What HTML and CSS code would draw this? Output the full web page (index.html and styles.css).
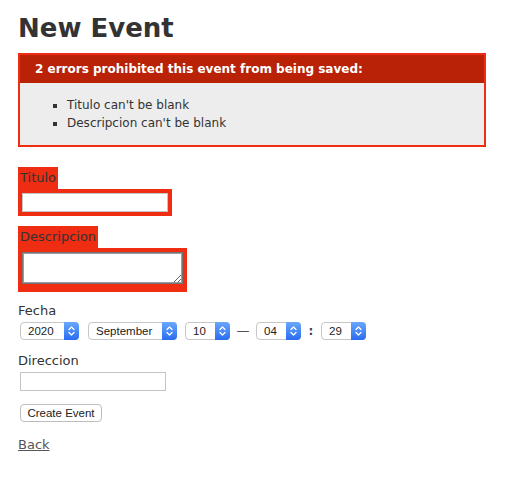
FILE: index.html
```html
<!DOCTYPE html>
<html lang="es">
<head>
<meta charset="utf-8">
<title>New Event</title>
<link rel="stylesheet" href="styles.css">
</head>
<body>
<h1>New Event</h1>
<form class="event-form">
  <div class="error-explanation">
    <h2>2 errors prohibited this event from being saved:</h2>
    <ul>
      <li>Titulo can't be blank</li>
      <li>Descripcion can't be blank</li>
    </ul>
  </div>

  <div class="field">
    <div class="with-errors"><label for="titulo">Titulo</label></div>
    <div class="with-errors"><input class="text-input" type="text" id="titulo"></div>
  </div>

  <div class="field">
    <div class="with-errors"><label for="descripcion">Descripcion</label></div>
    <div class="with-errors"><textarea class="text-area" id="descripcion"></textarea></div>
  </div>

  <div class="field">
    <label class="block-label">Fecha</label>
    <div class="date-row">
      <div class="sel w-year"><span class="sel-text">2020</span><span class="sel-arrow"><svg width="15" height="16" viewBox="0 0 15 16"><path d="M5 6.5 L7.5 4 L10 6.5 M5 9.5 L7.5 12 L10 9.5" fill="none" stroke="#fff" stroke-width="1.3" stroke-linecap="round" stroke-linejoin="round"/></svg></span></div>
      <div class="sel w-month"><span class="sel-text">September</span><span class="sel-arrow"><svg width="15" height="16" viewBox="0 0 15 16"><path d="M5 6.5 L7.5 4 L10 6.5 M5 9.5 L7.5 12 L10 9.5" fill="none" stroke="#fff" stroke-width="1.3" stroke-linecap="round" stroke-linejoin="round"/></svg></span></div>
      <div class="sel w-small gap-day"><span class="sel-text">10</span><span class="sel-arrow"><svg width="15" height="16" viewBox="0 0 15 16"><path d="M5 6.5 L7.5 4 L10 6.5 M5 9.5 L7.5 12 L10 9.5" fill="none" stroke="#fff" stroke-width="1.3" stroke-linecap="round" stroke-linejoin="round"/></svg></span></div>
      <span class="sep sep-dash">—</span>
      <div class="sel w-small"><span class="sel-text">04</span><span class="sel-arrow"><svg width="15" height="16" viewBox="0 0 15 16"><path d="M5 6.5 L7.5 4 L10 6.5 M5 9.5 L7.5 12 L10 9.5" fill="none" stroke="#fff" stroke-width="1.3" stroke-linecap="round" stroke-linejoin="round"/></svg></span></div>
      <span class="sep sep-colon">:</span>
      <div class="sel w-small"><span class="sel-text">29</span><span class="sel-arrow"><svg width="15" height="16" viewBox="0 0 15 16"><path d="M5 6.5 L7.5 4 L10 6.5 M5 9.5 L7.5 12 L10 9.5" fill="none" stroke="#fff" stroke-width="1.3" stroke-linecap="round" stroke-linejoin="round"/></svg></span></div>
    </div>
  </div>

  <div class="field">
    <label class="block-label" for="direccion">Direccion</label>
    <input class="text-input" type="text" id="direccion">
  </div>

  <div class="actions">
    <button class="btn" type="button">Create Event</button>
  </div>
</form>
<a class="back-link" href="#">Back</a>
</body>
</html>
```
FILE: styles.css
```css
body {
  margin: 18px;
  background: #fff;
  color: #333;
  font-family: "DejaVu Sans", Verdana, sans-serif;
  font-size: 13px;
  line-height: 18px;
}

h1 {
  font-size: 26px;
  line-height: 18px;
  font-weight: bold;
  margin: 0 0 17.4px;
  padding-top: 1px;
  height: 17px;
}

.event-form {
  margin: 0;
}

.error-explanation {
  width: 450px;
  border: 2px solid #ee2d13;
  padding: 7px 7px 0;
  margin-bottom: 20px;
  background: #ededed;
}

.error-explanation h2 {
  margin: -7px -7px 0;
  padding: 5px 5px 5px 15px;
  font-size: 12px;
  line-height: 18px;
  font-weight: bold;
  background: #b92207;
  color: #fff;
}

.error-explanation ul {
  margin: 13px 0;
  padding-left: 40px;
}

.error-explanation li {
  font-size: 12px;
  list-style: square;
}

.field {
  margin-bottom: 10px;
}

.actions {
  margin-top: 11px;
  margin-bottom: 12px;
}

.with-errors {
  display: table;
  padding: 2px;
  background: #ee2d13;
}

.block-label {
  display: block;
}

.text-input {
  display: block;
  box-sizing: border-box;
  width: 146px;
  height: 19px;
  margin: 2px;
  padding: 0 3px;
  border: 1px solid #c4c4c4;
  background: #fff;
  font: 12px "Liberation Sans", Arial, sans-serif;
}

.text-area {
  display: block;
  box-sizing: border-box;
  width: 161px;
  height: 32px;
  margin: 2px 2px 6px;
  padding: 2px;
  border: 1px solid #747474;
  box-shadow: inset 0 0 0 1px #9c9c9c;
  background: #fff;
  resize: both;
  font: 12px "Liberation Sans", Arial, sans-serif;
}

.date-row {
  display: flex;
  align-items: center;
  padding: 2px 0;
}

.sel {
  display: flex;
  align-items: center;
  box-sizing: border-box;
  height: 18px;
  border: 1px solid #c6c6c6;
  border-radius: 4px;
  background: #fff;
  color: #222;
  font-family: "Liberation Sans", Arial, sans-serif;
  font-size: 11.5px;
  line-height: 16px;
}

.sel-text {
  flex: 1;
  padding-left: 7px;
  white-space: nowrap;
}

.sel-arrow {
  display: flex;
  align-items: center;
  justify-content: center;
  align-self: stretch;
  width: 15px;
  margin: -1px -1px -1px 0;
  border-radius: 0 4px 4px 0;
  background: linear-gradient(#6aa8fc, #2a6cf1);
}

.w-year {
  width: 59px;
  margin-left: 2px;
}

.w-month {
  width: 89px;
  margin-left: 9px;
}

.w-small {
  width: 45px;
}

.gap-day {
  margin-left: 8px;
}

.sep {
  display: flex;
  justify-content: center;
  color: #444;
}

.sep-dash {
  width: 26px;
  font-size: 13px;
  color: #555;
}

.sep-colon {
  width: 20px;
  font-weight: bold;
  font-size: 12px;
}

.btn {
  box-sizing: border-box;
  width: 82px;
  height: 18px;
  margin: 2px;
  padding: 0;
  border: 1px solid #bdbdbd;
  border-radius: 4px;
  background: #fff;
  color: #222;
  font-family: "Liberation Sans", Arial, sans-serif;
  font-size: 11.5px;
  line-height: 16px;
}

.back-link {
  color: #555;
  text-decoration: underline;
}
```
